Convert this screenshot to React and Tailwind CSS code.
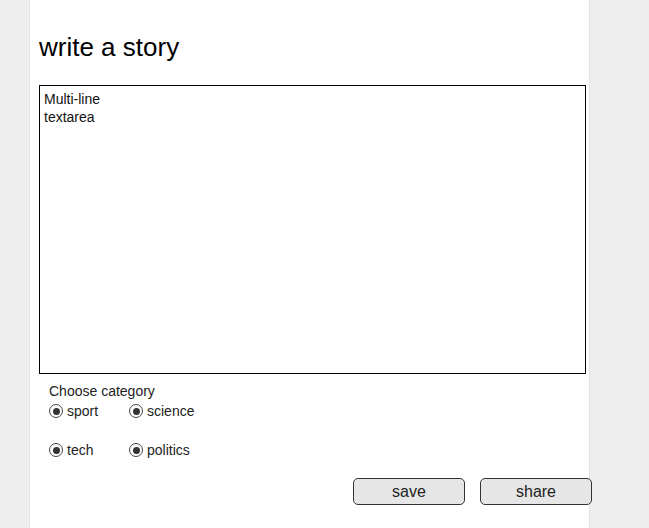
export default function App() {
  const Radio = ({ label }) => (
    <label className="flex items-center gap-[4px] w-[80px]">
      <span className="w-[14px] h-[14px] rounded-full border border-[#444] bg-white flex items-center justify-center">
        <span className="w-[7px] h-[7px] rounded-full bg-[#333]" />
      </span>
      <span className="text-[14px] leading-[18px] text-[#222]">{label}</span>
    </label>
  );
  return (
    <div className="w-[649px] h-[528px] bg-[#eeeeee] overflow-hidden" style={{ fontFamily: '"Liberation Sans", Arial, sans-serif' }}>
      <div className="ml-[29px] w-[561px] h-[528px] bg-white border-x border-[#e3e3e3] pl-[9px] pt-[32px]">
        <h1 className="text-[26px] leading-[30px] text-black font-normal">write a story</h1>
        <div className="mt-[23px] w-[547px] h-[289px] border border-black p-[4px] text-[14px] leading-[18px] text-[#111]">
          Multi-line
          <br />
          textarea
        </div>
        <div className="ml-[10px] mt-[8px]">
          <div className="text-[14px] leading-[18px] text-[#222]">Choose category</div>
          <div className="flex mt-[2px]">
            <Radio label="sport" />
            <Radio label="science" />
          </div>
          <div className="flex mt-[21px]">
            <Radio label="tech" />
            <Radio label="politics" />
          </div>
        </div>
        <div className="mt-[19px] w-[553px] flex justify-end gap-[15px]">
          <button className="w-[112px] h-[27px] rounded-[5px] border border-[#333] bg-[#e6e6e6] text-[16px] leading-[20px] text-[#222]">save</button>
          <button className="w-[112px] h-[27px] rounded-[5px] border border-[#333] bg-[#e6e6e6] text-[16px] leading-[20px] text-[#222]">share</button>
        </div>
      </div>
    </div>
  );
}
